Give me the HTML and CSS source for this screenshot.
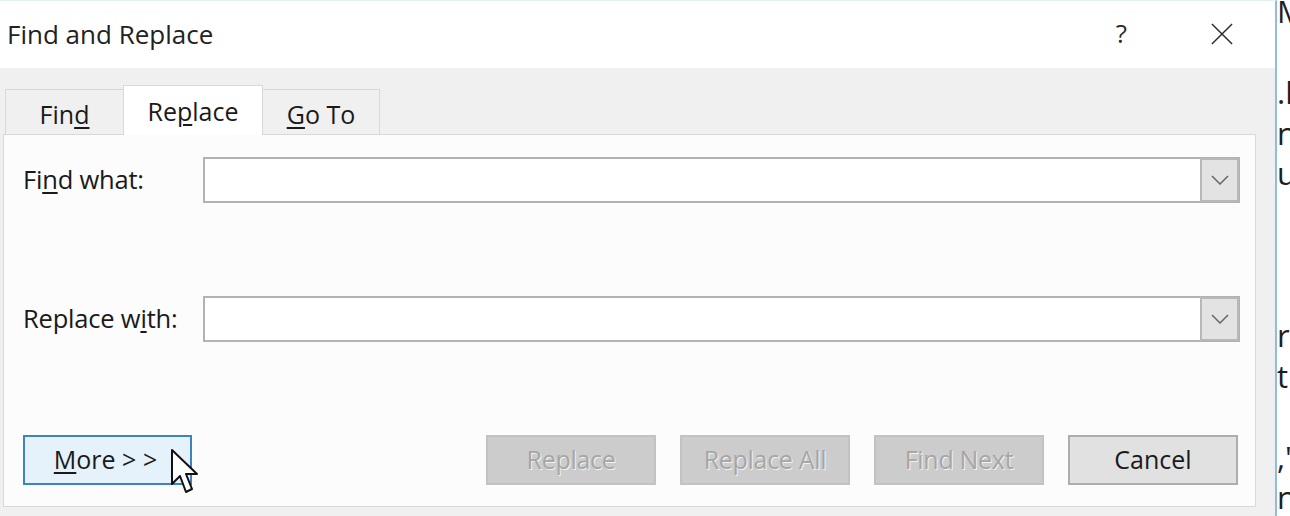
FILE: index.html
```html
<!DOCTYPE html>
<html>
<head>
<meta charset="utf-8">
<link rel="stylesheet" href="styles.css">
</head>
<body>
<div class="screen">
  <div class="dialog">
    <div class="titlebar">
      <span class="title">Find and Replace</span>
      <span class="help">?</span>
      <svg class="close" width="24" height="24" viewBox="0 0 24 24"><path d="M1 1 L23 23 M23 1 L1 23" stroke="#2b2b2b" stroke-width="1.6" fill="none"/></svg>
    </div>
    <div class="body">
      <div class="tabs">
        <div class="tab tab-find">Fin<u>d</u></div>
        <div class="tab tab-active">Re<u>p</u>lace</div>
        <div class="tab tab-goto"><u>G</u>o To</div>
      </div>
      <div class="panel">
        <div class="row">
          <label class="label">Fi<u>n</u>d what:</label>
          <div class="combo">
            <div class="combo-field"></div>
            <div class="combo-btn"><svg width="18" height="10" viewBox="0 0 18 10"><path d="M1 1 L9 9 L17 1" stroke="#666" stroke-width="1.5" fill="none"/></svg></div>
          </div>
        </div>
        <div class="row row-second">
          <label class="label">Replace w<u>i</u>th:</label>
          <div class="combo">
            <div class="combo-field"></div>
            <div class="combo-btn"><svg width="18" height="10" viewBox="0 0 18 10"><path d="M1 1 L9 9 L17 1" stroke="#666" stroke-width="1.5" fill="none"/></svg></div>
          </div>
        </div>
        <div class="buttons">
          <div class="more-wrap">
            <button class="btn btn-more"><u>M</u>ore &gt; &gt;</button>
            <svg class="cursor" width="30" height="48" viewBox="0 0 30 48"><path d="M2 2 L2 36 L10 28 L16 44 L22 41 L16 26 L27 26 Z" fill="#fff" stroke="#111" stroke-width="2" stroke-linejoin="round"/></svg>
          </div>
          <div class="spacer"></div>
          <button class="btn btn-disabled">Replace</button>
          <button class="btn btn-disabled">Replace All</button>
          <button class="btn btn-disabled">Find Next</button>
          <button class="btn btn-cancel">Cancel</button>
        </div>
      </div>
    </div>
  </div>
  <div class="doc">
    <div class="line">M</div>
    <div class="line"></div>
    <div class="line">.l</div>
    <div class="line">nu</div>
    <div class="line">u</div>
    <div class="line"></div>
    <div class="line"></div>
    <div class="line"></div>
    <div class="line">r</div>
    <div class="line">ti</div>
    <div class="line"></div>
    <div class="line">,'</div>
    <div class="line">na</div>
  </div>
</div>
</body>
</html>
```

FILE: styles.css
```css
* { box-sizing: border-box; }
html, body { margin: 0; padding: 0; }
body {
  width: 1290px;
  height: 516px;
  overflow: hidden;
  background: #fff;
  font-family: "Open Sans", "Noto Sans", sans-serif;
  color: #1a1a1a;
}
.screen {
  display: flex;
  width: 1290px;
  height: 516px;
}
.dialog {
  width: 1277px;
  flex: none;
  display: flex;
  flex-direction: column;
  border-right: 2px solid #8dbde6;
  border-top: 1px solid #e3f1f7;
  background: #f0f0f0;
}
.titlebar {
  height: 67px;
  flex: none;
  background: #fff;
  display: flex;
  align-items: center;
  padding-left: 7px;
}
.title {
  font-size: 26px;
  color: #222;
  letter-spacing: 0;
  flex: 1;
  margin-top: -2px;
}
.help {
  font-size: 26px;
  color: #2b2b2b;
  margin-right: 84px;
  margin-top: -4px;
}
.close {
  width: 22px;
  height: 22px;
  margin-right: 42px;
  margin-top: -2px;
}
.body {
  flex: 1;
  display: flex;
  flex-direction: column;
  padding: 17px 19px 0 3px;
}
.tabs {
  display: flex;
  align-items: flex-end;
  height: 49px;
  padding-left: 2px;
  flex: none;
}
.tab {
  height: 45px;
  border: 1px solid #d9d9d9;
  border-bottom: none;
  background: #f0f0f0;
  font-size: 25px;
  display: flex;
  align-items: center;
  justify-content: center;
  color: #1a1a1a;
  padding-top: 3px;
}
.tab-find { width: 118px; border-right: none; }
.tab-goto { width: 117px; border-left: none; }
.tab-active {
  width: 140px;
  height: 50px;
  background: #fff;
  position: relative;
  z-index: 1;
  margin-bottom: -1px;
  padding-top: 0;
}
u { text-decoration-thickness: 2px; text-underline-offset: 3px; }
.panel {
  height: 373px;
  border: 1px solid #d9d9d9;
  background: #fcfcfc;
  padding: 22px 15px 21px 19px;
  display: flex;
  flex-direction: column;
}
.row {
  display: flex;
  align-items: center;
  height: 46px;
}
.row-second { margin-top: 93px; }
.label {
  width: 180px;
  flex: none;
  font-size: 25.5px;
  color: #1a1a1a;
  letter-spacing: -0.2px;
  padding-bottom: 3px;
}
.combo {
  flex: 1;
  height: 46px;
  display: flex;
  border: 2px solid #b2b2b2;
  background: #fff;
}
.combo-field { flex: 1; }
.combo-btn {
  width: 39px;
  background: #e3e3e3;
  display: flex;
  align-items: center;
  justify-content: center;
  margin: -1px -1px -1px 0;
  border: 2px solid #b8b8b8;
}
.buttons {
  margin-top: auto;
  display: flex;
  height: 50px;
  gap: 24px;
  padding-right: 2px;
}
.spacer { flex: 1; }
.more-wrap { position: relative; }
.btn {
  width: 170px;
  height: 50px;
  font-family: inherit;
  font-size: 25px;
  padding: 0 0 3px 0;
  margin: 0;
}
.btn-more {
  width: 169px;
  background: #e5f1fb;
  border: 2px solid #3d83c4;
  color: #1a1a1a;
  padding-right: 4px;
}
.btn-disabled {
  background: #cccccc;
  border: 2px solid #c2c2c2;
  color: #a6a6a6;
  text-shadow: 1px 1px 0 #f2f2f2;
  letter-spacing: -0.3px;
}
.btn-cancel {
  background: #e1e1e1;
  border: 2px solid #adadad;
  color: #1a1a1a;
}
.cursor {
  position: absolute;
  left: 147px;
  top: 13px;
}
.doc {
  flex: 1;
  overflow: hidden;
  margin-top: -9px;
}
.line {
  height: 40.5px;
  line-height: 40.5px;
  font-size: 31px;
  color: #1e1e1e;
  white-space: nowrap;
}
```
